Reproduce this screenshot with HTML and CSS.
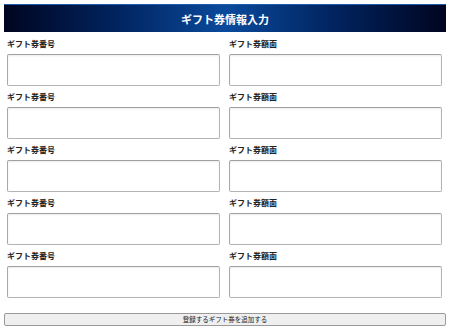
FILE: index.html
```html
<!DOCTYPE html>
<html lang="ja">
<head>
<meta charset="utf-8">
<link rel="stylesheet" href="styles.css">
</head>
<body>
<div class="page">
  <div class="header">ギフト券情報入力</div>
  <div class="grid">
    <div class="field"><label class="lbl">ギフト券番号</label><input class="inp" type="text"></div>
    <div class="field"><label class="lbl">ギフト券額面</label><input class="inp" type="text"></div>
    <div class="field"><label class="lbl">ギフト券番号</label><input class="inp" type="text"></div>
    <div class="field"><label class="lbl">ギフト券額面</label><input class="inp" type="text"></div>
    <div class="field"><label class="lbl">ギフト券番号</label><input class="inp" type="text"></div>
    <div class="field"><label class="lbl">ギフト券額面</label><input class="inp" type="text"></div>
    <div class="field"><label class="lbl">ギフト券番号</label><input class="inp" type="text"></div>
    <div class="field"><label class="lbl">ギフト券額面</label><input class="inp" type="text"></div>
    <div class="field"><label class="lbl">ギフト券番号</label><input class="inp" type="text"></div>
    <div class="field"><label class="lbl">ギフト券額面</label><input class="inp" type="text"></div>
  </div>
  <button class="add" type="button">登録するギフト券を追加する</button>
</div>
</body>
</html>
```
FILE: styles.css
```css
html, body {
  margin: 0;
  padding: 0;
  background: #ffffff;
}
body {
  padding: 4px;
  font-family: "Noto Sans CJK JP", "Noto Sans", sans-serif;
}
.page {
  width: 442px;
  display: flex;
  flex-direction: column;
}
.header {
  height: 28px;
  box-sizing: border-box;
  display: flex;
  align-items: center;
  justify-content: center;
  color: #ffffff;
  font-weight: bold;
  font-size: 11px;
  background: linear-gradient(to right, #000520 0%, #01235e 25%, #0a4a9c 50%, #01235e 75%, #000520 100%);
  border-top: 1px solid #1d5bb0;
}
.grid {
  display: grid;
  grid-template-columns: 1fr 1fr;
  column-gap: 9px;
  padding: 0 4px 0 3px;
}
.field {
  display: flex;
  flex-direction: column;
}
.lbl {
  height: 21px;
  display: flex;
  align-items: center;
  padding-top: 1px;
  box-sizing: border-box;
  font-size: 8px;
  font-weight: bold;
  color: #222222;
  line-height: 1;
}
.field:nth-child(-n+2) .lbl {
  height: 22px;
}
.inp {
  display: block;
  height: 32px;
  width: 100%;
  box-sizing: border-box;
  margin: 0;
  border: 1px solid #b4b4b4;
  border-top-color: #a0a0a0;
  border-left-color: #a8a8a8;
  border-radius: 2px;
  box-shadow: inset 0 1px 2px rgba(0, 0, 0, 0.08);
  background: #ffffff;
}
.add {
  margin-top: 15px;
  height: 13px;
  width: 442px;
  padding: 0;
  box-sizing: border-box;
  border: 1px solid #9a9a9a;
  border-radius: 2px;
  background: #efefef;
  color: #222222;
  font-family: "Noto Sans CJK JP", "Noto Sans", sans-serif;
  font-size: 6.5px;
  line-height: 11px;
}
```
